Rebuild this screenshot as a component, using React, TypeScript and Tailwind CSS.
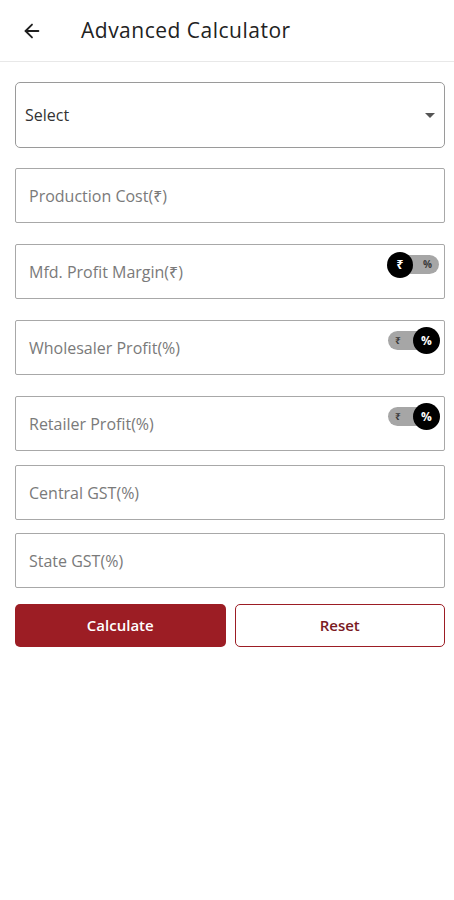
import React, { useState } from "react";
import { ArrowLeft } from "lucide-react";

type Unit = "rupee" | "percent";

const UnitToggle = ({ value }: { value: Unit }) => {
  const rupee = value === "rupee";
  return (
    <div className="relative w-[53px] h-[27px] flex items-center">
      <div
        className={
          rupee
            ? "absolute left-[2px] right-[1px] h-[19px] rounded-full bg-[#a6a6a6] flex items-center justify-end pr-[7px] text-[10px] font-bold text-[#3a3a3a]"
            : "absolute left-[1px] right-[8px] h-[19px] rounded-full bg-[#a6a6a6] flex items-center justify-start pl-[7px] text-[10px] font-bold text-[#3a3a3a]"
        }
      >
        <span>{rupee ? "%" : "₹"}</span>
      </div>
      <div
        className={
          rupee
            ? "absolute left-0 w-[26px] h-[26px] rounded-full bg-black text-white flex items-center justify-center text-[12px] font-bold"
            : "absolute right-0 w-[27px] h-[27px] rounded-full bg-black text-white flex items-center justify-center text-[12px] font-bold"
        }
      >
        {rupee ? "₹" : "%"}
      </div>
    </div>
  );
};

const Field = ({ label, unit }: { label: string; unit?: Unit }) => (
  <div className="h-[55px] border border-[#a8a8a8] rounded-[2px] flex items-start pl-[13px] pr-[4px]">
    <span className="mt-[15px] text-[16px] text-[#7a7a7a]">{label}</span>
    {unit && (
      <div className="ml-auto mt-[6px]">
        <UnitToggle value={unit} />
      </div>
    )}
  </div>
);

const App = () => {
  const [units] = useState<Unit[]>(["rupee", "percent", "percent"]);

  return (
    <div
      className="w-[454px] min-h-screen bg-white"
      style={{ fontFamily: '"Open Sans", "Noto Sans", sans-serif' }}
    >
      <div className="h-[62px] flex items-center border-b border-[#e8e8e8]">
        <ArrowLeft className="ml-[21px] text-[#1f1f1f]" size={22} strokeWidth={2} />
        <h1 className="ml-[38px] text-[21px] text-[#222] tracking-[0.5px] leading-none">
          Advanced Calculator
        </h1>
      </div>

      <div className="pl-[15px] pr-[9px] pt-[20px] flex flex-col">
        <div className="h-[66px] border border-[#9a9a9a] rounded-[5px] flex items-center pl-[9px] pr-[9px]">
          <span className="text-[16px] text-[#333]">Select</span>
          <svg className="ml-auto" width="10" height="5" viewBox="0 0 10 5">
            <path d="M0 0 L10 0 L5 5 Z" fill="#555" />
          </svg>
        </div>

        <div className="mt-[20px] flex flex-col gap-[21px]">
          <Field label="Production Cost(₹)" />
          <Field label="Mfd. Profit Margin(₹)" unit={units[0]} />
          <Field label="Wholesaler Profit(%)" unit={units[1]} />
          <Field label="Retailer Profit(%)" unit={units[2]} />
        </div>

        <div className="mt-[14px] flex flex-col gap-[13px]">
          <Field label="Central GST(%)" />
          <Field label="State GST(%)" />
        </div>

        <div className="mt-[16px] grid grid-cols-2 gap-[9px]">
          <button className="h-[43px] rounded-[5px] bg-[#9c1d24] text-white text-[15px] font-semibold">
            Calculate
          </button>
          <button className="h-[43px] rounded-[5px] border border-[#9c1d24] bg-white text-[#7a1a1f] text-[15px] font-semibold">
            Reset
          </button>
        </div>
      </div>
    </div>
  );
};

export default App;
